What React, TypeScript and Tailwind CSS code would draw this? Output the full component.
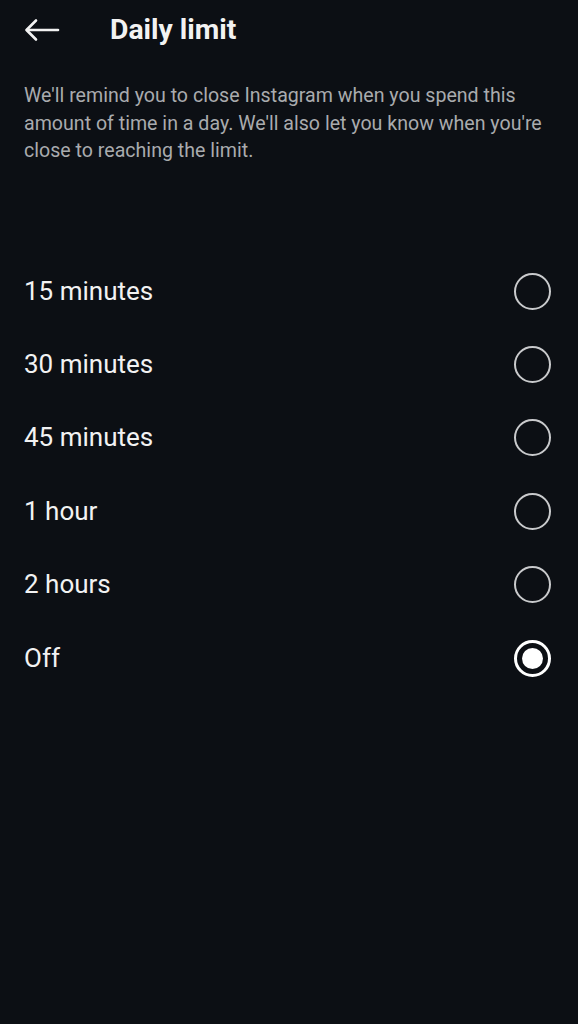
import React, { useState } from "react";

const options = ["15 minutes", "30 minutes", "45 minutes", "1 hour", "2 hours", "Off"];

export default function App() {
  const [selected, setSelected] = useState("Off");

  return (
    <div className="min-h-[1024px] w-full bg-[#0c0f14] text-white font-['Roboto',sans-serif]">
      <div className="h-[60px] flex items-center px-[24px]">
        <svg width="36" height="24" viewBox="0 0 36 24" fill="none" stroke="#f2f2f2" strokeWidth="2.6" strokeLinecap="round" strokeLinejoin="round">
          <path d="M34 12H3" />
          <path d="M12 2.5L2.5 12L12 21.5" />
        </svg>
        <h1 className="ml-[50px] text-[28.3px] font-bold text-[#f2f2f2]">Daily limit</h1>
      </div>
      <p className="mt-[22px] pl-[24px] pr-[20px] text-[19.6px] leading-[27.5px] text-[#a9abae]">
        We'll remind you to close Instagram when you spend this amount of time in a day. We'll also let you know when you're close to reaching the limit.
      </p>
      <div className="mt-[90px] flex flex-col">
        {options.map((opt) => (
          <LimitOption key={opt} label={opt} selected={selected === opt} onSelect={() => setSelected(opt)} />
        ))}
      </div>
    </div>
  );
}

function LimitOption({ label, selected, onSelect }: { label: string; selected: boolean; onSelect: () => void }) {
  return (
    <div className="h-[73.4px] flex items-center justify-between pl-[24px] pr-[27px] cursor-pointer" onClick={onSelect}>
      <span className="text-[26px] text-[#f2f2f2]">{label}</span>
      {selected ? (
        <div className="w-[37px] h-[37px] rounded-full border-[3px] border-white flex items-center justify-center">
          <div className="w-[21px] h-[21px] rounded-full bg-white" />
        </div>
      ) : (
        <div className="w-[37px] h-[37px] rounded-full border-[2.5px] border-[#c9cacc]" />
      )}
    </div>
  );
}
